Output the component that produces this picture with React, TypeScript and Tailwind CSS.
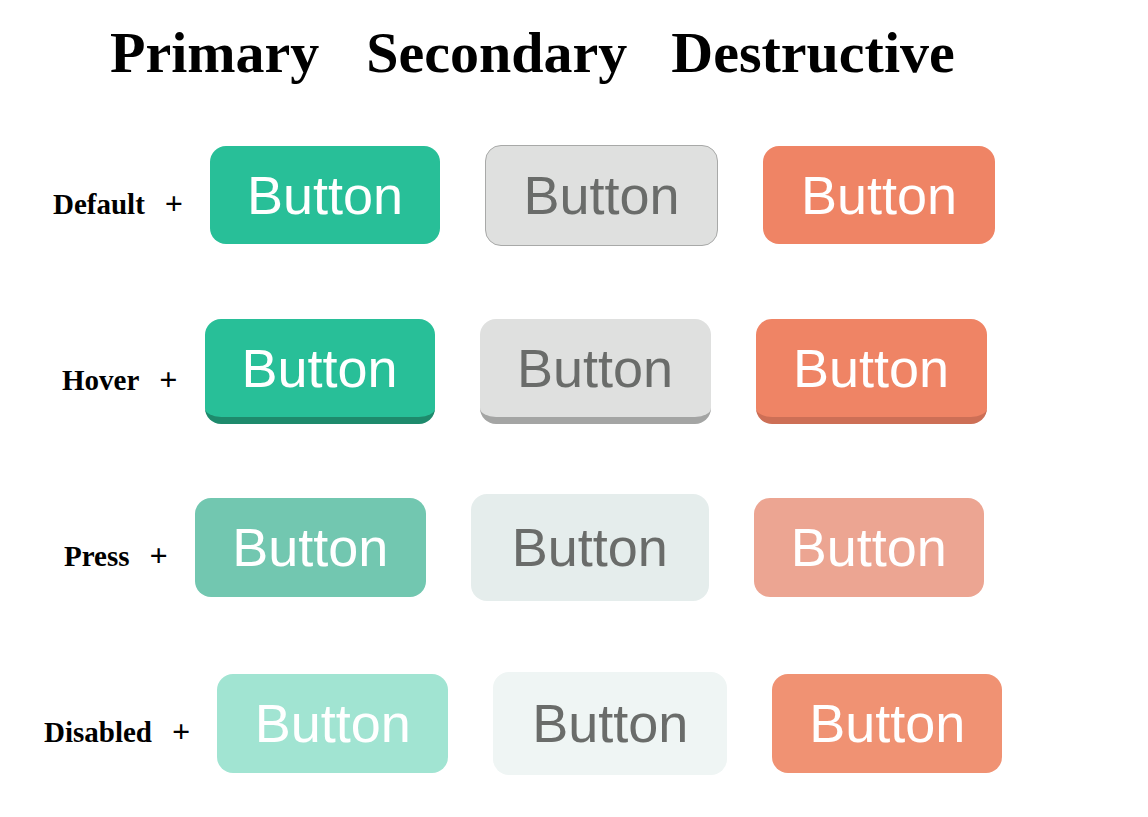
const serif = "font-['Liberation_Serif','Times_New_Roman',serif] font-bold text-black";

type Btn = { w: string; cls: string };
type Row = { label: string; pl: string; buttons: Btn[] };

const ROWS: Row[] = [
  {
    label: "Default",
    pl: "pl-[53px]",
    buttons: [
      { w: "w-[230px] h-[98px]", cls: "bg-[#28bf98] text-white" },
      { w: "w-[233px] h-[101px]", cls: "bg-[#dfe0df] border border-[#a8a9a8] text-[#6a6c6a]" },
      { w: "w-[232px] h-[98px]", cls: "bg-[#ef8465] text-white" },
    ],
  },
  {
    label: "Hover",
    pl: "pl-[62px]",
    buttons: [
      { w: "w-[230px] h-[105px]", cls: "bg-[#28bf98] border-b-[7px] border-[#1e8a6c] text-white" },
      { w: "w-[231px] h-[105px]", cls: "bg-[#dfe0df] border-b-[7px] border-[#a4a5a4] text-[#6a6c6a]" },
      { w: "w-[231px] h-[105px]", cls: "bg-[#ef8465] border-b-[7px] border-[#cd6f56] text-white" },
    ],
  },
  {
    label: "Press",
    pl: "pl-[64px]",
    buttons: [
      { w: "w-[231px] h-[99px]", cls: "bg-[#72c7b0] text-white" },
      { w: "w-[238px] h-[107px]", cls: "bg-[#e5edec] text-[#6a6c6a]" },
      { w: "w-[230px] h-[99px]", cls: "bg-[#eca592] text-white" },
    ],
  },
  {
    label: "Disabled",
    pl: "pl-[44px]",
    buttons: [
      { w: "w-[231px] h-[99px]", cls: "bg-[#a1e4d2] text-white" },
      { w: "w-[234px] h-[103px]", cls: "bg-[#eff5f4] text-[#6a6c6a]" },
      { w: "w-[230px] h-[99px]", cls: "bg-[#f09273] text-white" },
    ],
  },
];

function StateRow({ row }: { row: Row }) {
  return (
    <div className={`flex h-[176px] items-center ${row.pl}`}>
      {/* label and plus sit a bit lower than the button centre */}
      <div className={`mt-[16px] flex items-baseline gap-[20px] leading-none ${serif}`}>
        <span className="text-[29px]">{row.label}</span>
        <span className="text-[32px]">+</span>
      </div>
      <div className="ml-[27px] flex items-center gap-[45px]">
        {row.buttons.map((b, i) => (
          <div
            key={i}
            className={`flex items-center justify-center rounded-[16px] font-['Liberation_Sans',Arial,sans-serif] text-[54px] leading-none ${b.w} ${b.cls}`}
          >
            Button
          </div>
        ))}
      </div>
    </div>
  );
}

export default function App() {
  return (
    <div className="min-h-[817px] w-[1148px] bg-white">
      <div className={`flex pl-[110px] pt-[24px] text-[58px] leading-none ${serif}`}>
        <span>Primary</span>
        <span className="ml-[47px]">Secondary</span>
        <span className="ml-[44px]">Destructive</span>
      </div>
      <div className="mt-[25px]">
        {ROWS.map((r) => (
          <StateRow key={r.label} row={r} />
        ))}
      </div>
    </div>
  );
}
